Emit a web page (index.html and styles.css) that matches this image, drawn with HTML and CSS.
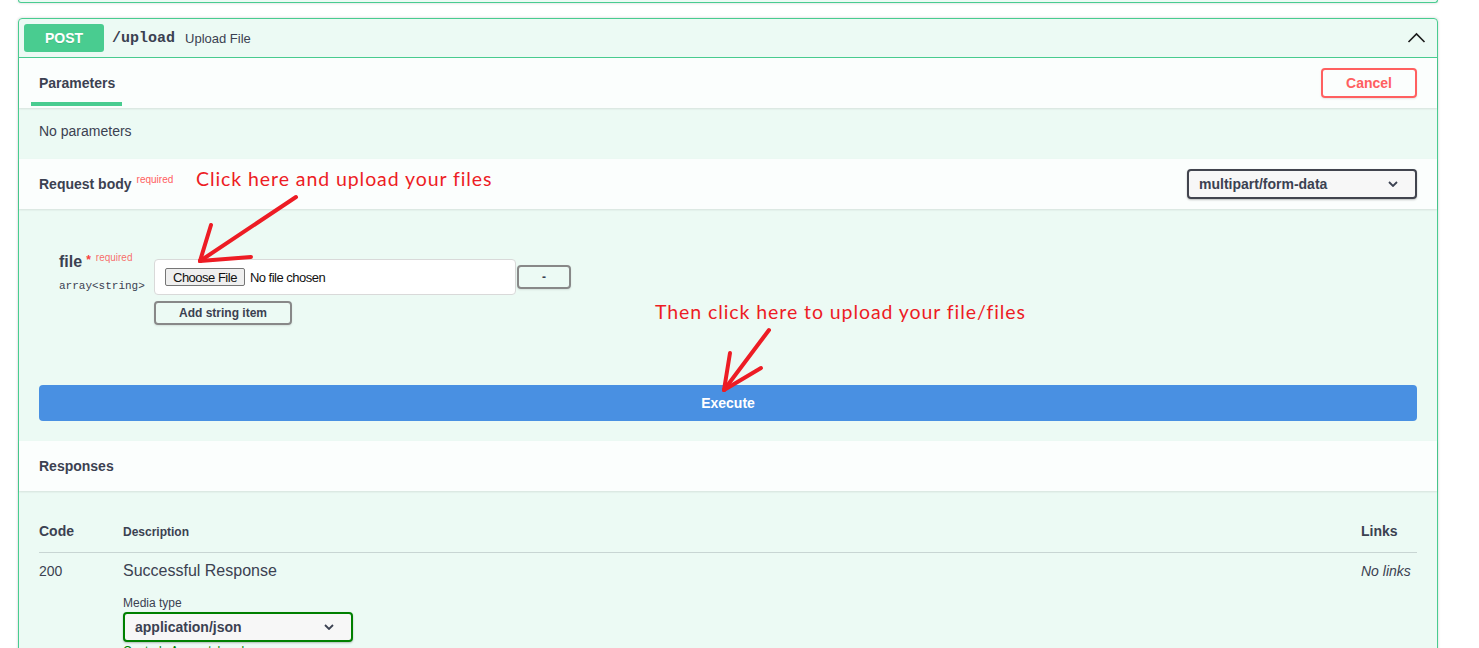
FILE: index.html
```html
<!DOCTYPE html>
<html lang="en">
<head>
<meta charset="utf-8">
<title>POST /upload</title>
<link rel="stylesheet" href="styles.css">
</head>
<body>
<div class="wrap">
  <div class="prev-block"></div>
  <div class="opblock">
    <div class="summary">
      <span class="method">POST</span>
      <span class="path">/upload</span>
      <span class="summary-desc">Upload File</span>
      <svg class="toggle" width="20" height="20" viewBox="0 0 20 20"><polyline points="2.5,14 10.5,6 18.5,14" fill="none" stroke="#1b1b1b" stroke-width="1.6"/></svg>
    </div>

    <div class="section-header">
      <div class="tab">Parameters</div>
      <button class="btn-cancel">Cancel</button>
    </div>
    <div class="no-params">No parameters</div>

    <div class="section-header">
      <div class="rb-title">Request body<span class="req">required</span></div>
      <div class="select select-dark">
        <span>multipart/form-data</span>
        <svg width="10" height="6" viewBox="0 0 10 6"><polyline points="1,1 5,5 9,1" fill="none" stroke="#3b4151" stroke-width="1.8"/></svg>
      </div>
    </div>

    <div class="rb-body">
      <div class="param">
        <div class="param-name">
          <div class="name">file<span class="star">*</span><span class="req-small">required</span></div>
          <div class="type">array&lt;string&gt;</div>
        </div>
        <div class="param-input">
          <div class="file-row">
            <div class="file-box"><span class="choose">Choose File</span><span class="nofile">No file chosen</span></div>
            <button class="btn-minus">-</button>
          </div>
          <button class="btn-add">Add string item</button>
        </div>
      </div>
      <button class="btn-execute">Execute</button>
    </div>

    <div class="section-header">
      <div class="title">Responses</div>
    </div>
    <div class="responses">
      <div class="resp-head">
        <div class="h-code">Code</div>
        <div class="h-desc">Description</div>
        <div class="h-links">Links</div>
      </div>
      <div class="resp-row">
        <div class="r-code">200</div>
        <div class="r-desc">
          <div class="r-text">Successful Response</div>
          <div class="mt-label">Media type</div>
          <div class="select select-green">
            <span>application/json</span>
            <svg width="10" height="6" viewBox="0 0 10 6"><polyline points="1,1 5,5 9,1" fill="none" stroke="#3b4151" stroke-width="1.8"/></svg>
          </div>
          <div class="accept">Controls <code>Accept</code> header.</div>
        </div>
        <div class="r-links">No links</div>
      </div>
    </div>
  </div>
</div>

<div class="note note-1">Click here and upload your files</div>
<div class="note note-2">Then click here to upload your file/files</div>
<svg class="arrows" width="1479" height="648" viewBox="0 0 1479 648">
  <g fill="none" stroke="#ed1c24" stroke-width="4" stroke-linecap="round" stroke-linejoin="round">
    <line x1="296" y1="197" x2="200" y2="261"/>
    <line x1="211" y1="225" x2="200" y2="261"/>
    <line x1="200" y1="261" x2="251" y2="257"/>
    <line x1="769" y1="330" x2="724" y2="390"/>
    <line x1="730" y1="353" x2="724" y2="390"/>
    <line x1="761" y1="368" x2="724" y2="390"/>
  </g>
</svg>
</body>
</html>
```

FILE: styles.css
```css
* { box-sizing: border-box; }

html, body {
  margin: 0;
  padding: 0;
  background: #fff;
}

body {
  position: relative;
  width: 1479px;
  height: 648px;
  overflow: hidden;
  font-family: "Liberation Sans", Arial, sans-serif;
  color: #3b4151;
}

button {
  font-family: inherit;
  color: #3b4151;
  cursor: pointer;
}

.wrap {
  margin-left: 18px;
  width: 1420px;
}

.prev-block {
  height: 3px;
  border: 1px solid #49cc90;
  border-top: 0;
  border-radius: 0 0 4px 4px;
  background: rgba(73, 204, 144, .1);
  box-shadow: 0 0 3px rgba(0, 0, 0, .19);
  margin-bottom: 15px;
}

.opblock {
  border: 1px solid #49cc90;
  border-radius: 4px;
  background: rgba(73, 204, 144, .1);
  box-shadow: 0 0 3px rgba(0, 0, 0, .19);
}

/* summary bar */
.summary {
  display: flex;
  align-items: center;
  padding: 5px;
  border-bottom: 1px solid #49cc90;
}

.method {
  min-width: 80px;
  padding: 6px 0;
  line-height: 16px;
  font-size: 14px;
  font-weight: 700;
  text-align: center;
  color: #fff;
  background: #49cc90;
  border-radius: 3px;
  text-shadow: 0 1px 0 rgba(0, 0, 0, .1);
}

.path {
  padding: 0 10px 0 8px;
  font-family: "Liberation Mono", "Courier New", monospace;
  font-size: 15px;
  font-weight: 700;
}

.summary-desc {
  font-size: 13px;
}

.toggle {
  margin-left: auto;
  margin-right: 6px;
}

/* section headers */
.section-header {
  display: flex;
  align-items: center;
  justify-content: space-between;
  height: 50px;
  padding: 0 20px;
  background: rgba(255, 255, 255, .8);
  box-shadow: 0 1px 2px rgba(0, 0, 0, .1);
}

.tab {
  position: relative;
  font-size: 14px;
  line-height: 18px;
  font-weight: 700;
}

.tab::after {
  content: "";
  position: absolute;
  left: -8px;
  right: -7px;
  top: 28px;
  height: 4px;
  background: #49cc90;
}

.btn-cancel {
  width: 96px;
  height: 30px;
  border: 2px solid #ff6060;
  border-radius: 4px;
  background: transparent;
  color: #ff6060;
  font-size: 14px;
  font-weight: 700;
  box-shadow: 0 1px 2px rgba(0, 0, 0, .1);
}

.no-params {
  padding: 15px 20px 20px;
  font-size: 14px;
  line-height: 16px;
}

.rb-title,
.title {
  font-size: 14px;
  font-weight: 700;
}

.req {
  position: relative;
  top: -6px;
  padding-left: 5px;
  font-size: 10px;
  font-weight: 400;
  color: #ff6060;
}

.select {
  display: flex;
  align-items: center;
  justify-content: space-between;
  width: 230px;
  height: 30px;
  padding: 0 17px 0 10px;
  border: 2px solid #41444e;
  border-radius: 4px;
  background: #f7f7f7;
  font-size: 14px;
  font-weight: 700;
  box-shadow: 0 1px 2px rgba(0, 0, 0, .25);
}

.select-green {
  border-color: #008000;
}

/* request body */
.rb-body {
  padding: 44px 20px 20px;
}

.param {
  display: flex;
  align-items: flex-start;
  padding-left: 20px;
}

.param-name {
  width: 95px;
}

.name {
  font-size: 16px;
  line-height: 18px;
  font-weight: 700;
}

.star {
  position: relative;
  top: -3px;
  margin-left: 4px;
  font-size: 12px;
  color: #f93e3e;
}

.req-small {
  position: relative;
  top: -6px;
  padding-left: 5px;
  font-size: 10px;
  font-weight: 400;
  color: rgba(255, 0, 0, .6);
}

.type {
  margin-top: 6px;
  font-family: "Liberation Mono", "DejaVu Sans Mono", monospace;
  font-size: 11px;
  line-height: 14px;
}

.param-input {
  margin-top: 6px;
}

.file-row {
  display: flex;
  align-items: center;
}

.file-box {
  display: flex;
  align-items: center;
  width: 362px;
  height: 36px;
  padding-left: 10px;
  border: 1px solid #d9d9d9;
  border-radius: 4px;
  background: #fff;
  font-size: 13px;
  letter-spacing: -0.5px;
  color: #111;
}

.choose {
  display: inline-flex;
  align-items: center;
  height: 18px;
  padding: 0 7px;
  border: 1px solid #767676;
  border-radius: 2px;
  background: #efefef;
}

.nofile {
  margin-left: 5px;
}

.btn-minus {
  width: 54px;
  height: 24px;
  margin-left: 1px;
  border: 2px solid #888;
  border-radius: 4px;
  background: transparent;
  font-size: 12px;
  font-weight: 700;
  box-shadow: 0 1px 2px rgba(0, 0, 0, .1);
}

.btn-add {
  display: block;
  width: 138px;
  height: 24px;
  margin-top: 6px;
  padding: 0;
  border: 2px solid #888;
  border-radius: 4px;
  background: transparent;
  font-size: 12px;
  font-weight: 700;
  box-shadow: 0 1px 2px rgba(0, 0, 0, .1);
}

.btn-execute {
  display: block;
  width: 100%;
  height: 36px;
  margin-top: 60px;
  border: 0;
  border-radius: 4px;
  background: #4990e2;
  color: #fff;
  font-size: 14px;
  font-weight: 700;
}

/* responses */
.responses {
  padding: 0 20px;
}

.resp-head {
  display: grid;
  grid-template-columns: 84px 1fr 56px;
  align-items: baseline;
  padding: 32px 0 12px;
  border-bottom: 1px solid rgba(59, 65, 81, .2);
}

.h-code,
.h-links {
  font-size: 14px;
  line-height: 16px;
  font-weight: 700;
}

.h-desc {
  font-size: 12px;
  line-height: 16px;
  font-weight: 700;
}

.resp-row {
  display: grid;
  grid-template-columns: 84px 1fr 56px;
  align-items: start;
  padding-top: 9px;
}

.r-code {
  font-size: 14px;
  line-height: 16px;
  padding-top: 1px;
}

.r-text {
  font-size: 16px;
  line-height: 18px;
}

.mt-label {
  margin-top: 16px;
  font-size: 12px;
  line-height: 14px;
}

.mt-label + .select {
  margin-top: 2px;
}

.accept {
  margin-top: 2px;
  font-size: 12px;
  color: #008000;
}

.accept code {
  font-family: "Liberation Mono", monospace;
}

.r-links {
  font-size: 14px;
  line-height: 16px;
  font-style: italic;
  padding-top: 1px;
}

/* annotations drawn over the page */
.note {
  position: absolute;
  font-family: Lato, "Open Sans", sans-serif;
  font-size: 19.5px;
  line-height: 19px;
  letter-spacing: 0.92px;
  color: #ed1c24;
  white-space: nowrap;
}

.note-1 {
  left: 196px;
  top: 169px;
}

.note-2 {
  left: 655px;
  top: 302px;
}

.arrows {
  position: absolute;
  left: 0;
  top: 0;
  pointer-events: none;
}
```
